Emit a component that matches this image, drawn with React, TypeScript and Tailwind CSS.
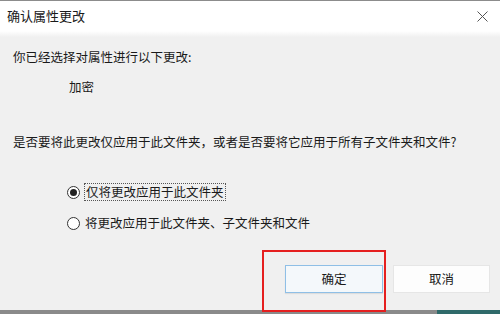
const font = "font-['Microsoft_YaHei','Noto_Sans_CJK_SC',sans-serif]";

function Radio({ checked }: { checked: boolean }) {
  return (
    <span className="flex h-[13px] w-[13px] items-center justify-center rounded-full border border-[#333] bg-white">
      {checked && <span className="h-[7px] w-[7px] rounded-full bg-[#222]" />}
    </span>
  );
}

export default function App() {
  return (
    <div
      className={`relative flex h-[314px] w-[500px] flex-col overflow-hidden bg-[#f0f0f0] text-[12.5px] leading-[18px] text-[#1a1a1a] ${font}`}
    >
      <div className="flex h-[31px] items-center justify-between border-t border-[#8c8c8c] bg-white pl-[7px] pr-[12px]">
        <span className="text-[13px]">确认属性更改</span>
        <svg width="11" height="11" viewBox="0 0 11 11" className="text-[#555]">
          <path d="M0.5 0.5 L10.5 10.5 M10.5 0.5 L0.5 10.5" stroke="currentColor" strokeWidth="1" />
        </svg>
      </div>
      <div className="h-[6px] bg-gradient-to-b from-white to-[#f0f0f0]" />

      <div className="flex flex-1 flex-col">
        <div className="flex flex-col px-[13px]">
          <p className="mt-[11px]">你已经选择对属性进行以下更改:</p>
          <p className="mt-[12px] pl-[56px]">加密</p>
          <p className="mt-[37px]">是否要将此更改仅应用于此文件夹，或者是否要将它应用于所有子文件夹和文件?</p>

          <div className="mt-[32px] flex flex-col gap-[13px] pl-[54px]">
            <label className="flex items-center gap-[4px]">
              <Radio checked />
              <span className="border border-dotted border-[#555] px-[1px] leading-[16px]">仅将更改应用于此文件夹</span>
            </label>
            <label className="flex items-center gap-[5px]">
              <Radio checked={false} />
              <span>将更改应用于此文件夹、子文件夹和文件</span>
            </label>
          </div>
        </div>

        <div className="mt-[33px] flex justify-end gap-[10px] pr-[10px]">
          <button
            type="button"
            className="flex h-[28px] w-[98px] items-center justify-center border border-[#8fbfe6] bg-[#f4f8fb] shadow-[0_1px_1px_rgba(0,0,0,0.08)]"
          >
            确定
          </button>
          <button
            type="button"
            className="flex h-[28px] w-[97px] items-center justify-center border border-[#e6e6e6] bg-[#fdfdfd]"
          >
            取消
          </button>
        </div>
      </div>

      <div className="flex h-[4px]">
        <div className="flex-1 bg-[#8a8a8a]" />
        <div className="w-[63px] bg-[#2f6a6a]" />
      </div>

      <div className="absolute left-[262px] top-[250px] h-[62px] w-[124px] border-2 border-[#e51f1f]" />
    </div>
  );
}
